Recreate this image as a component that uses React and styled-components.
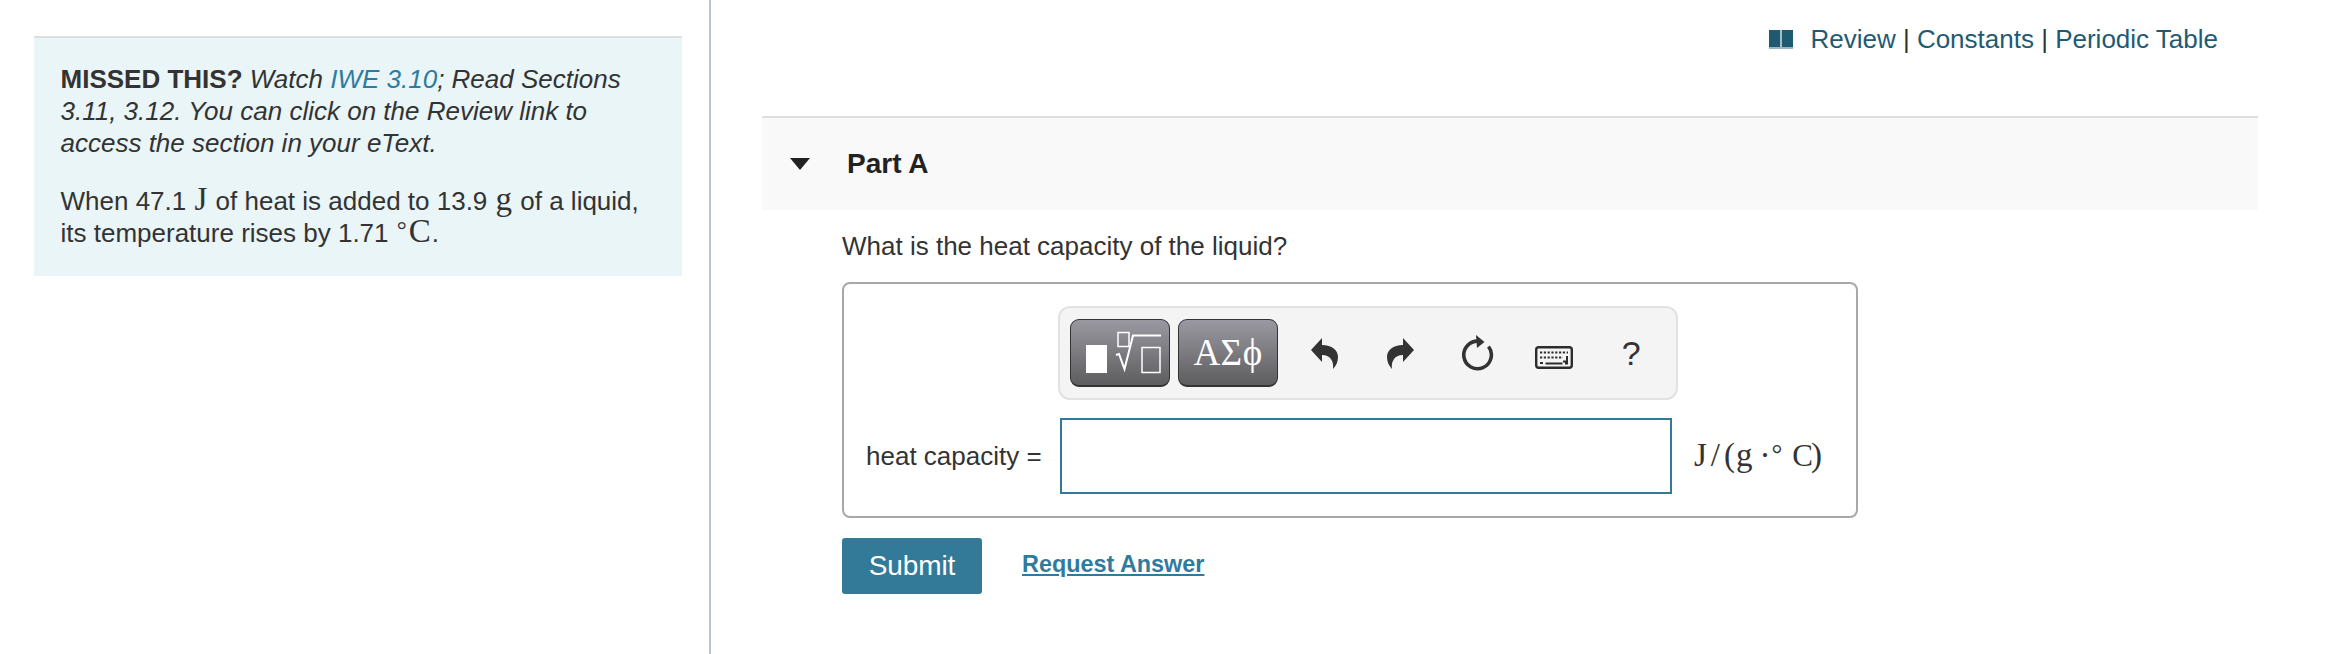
import React from 'react';
import styled, { createGlobalStyle } from 'styled-components';

const Global = createGlobalStyle`
  html, body { margin: 0; padding: 0; background: #fff; }
  body { font-family: "Liberation Sans", Arial, sans-serif; color: #333; }
`;
const Page = styled.div`
  display: grid; grid-template-columns: 711px 1fr; width: 2346px; height: 654px; overflow: hidden;
`;
const LeftColumn = styled.aside`
  border-right: 2px solid #b9c5cc; padding: 36px 27px 0 34px; box-sizing: border-box; height: 654px;
`;
const Intro = styled.section`
  border-top: 2px solid #dedee0; background: #e9f5f7; height: 240px; box-sizing: border-box;
  padding: 25px 38px 0 26.5px; font-size: 26px; line-height: 32px; color: #333;
`;
const Para = styled.p`
  margin: 0 0 25.5px;
`;
const Em = styled.em``;
const TextLink = styled.a`
  color: #2f7ba0;
`;
const Math = styled.span`
  font-family: "Liberation Serif", serif; font-size: 33px; line-height: 20px; margin: 0 1px;
`;
const Degree = styled.span`
  font-family: "Liberation Serif", serif; font-size: 25px; line-height: 20px; margin: 0 1px 0 1px; vertical-align: 4px;
`;
const RightColumn = styled.main`
  padding: 0 88px 0 51px; box-sizing: border-box;
`;
const ResourceBar = styled.nav`
  display: flex; align-items: center; justify-content: flex-end; height: 116px; padding: 0 40px 38px 0; box-sizing: border-box;
  font-size: 26px; color: #333; white-space: pre;
`;
const BookIcon = styled.svg`
  width: 24px; height: 21px; margin-right: 17px;
`;
const ResourceLink = styled.a`
  color: #1f5a73;
`;
const PartHeader = styled.header`
  display: flex; align-items: center; height: 94px; box-sizing: border-box; border-top: 2px solid #dedee0; background: #f9f9f9;
  padding: 0 0 0 28px;
`;
const Caret = styled.span`
  width: 0; height: 0; border-left: 10px solid transparent; border-right: 10px solid transparent; border-top: 12px solid #222;
  margin-right: 37px;
`;
const PartTitle = styled.h2`
  margin: 0; font-size: 28px; font-weight: 700; color: #222;
`;
const PartBody = styled.div`
  padding: 0 0 0 80px;
`;
const Question = styled.p`
  margin: 0; height: 72px; display: flex; align-items: center; font-size: 26px; color: #333;
`;
const AnswerBox = styled.div`
  width: 1016px; height: 236px; box-sizing: border-box; border: 2px solid #a8a8a8; border-radius: 8px;
  padding: 22px 22px 0 22px;
`;
const Toolbar = styled.div`
  display: flex; align-items: center; width: 620px; height: 94px; margin-left: 192px; box-sizing: border-box;
  border: 2px solid #e2e2e2; border-radius: 12px; background: #f4f4f4; padding: 0 0 0 10px;
`;
const TemplateButton = styled.div`
  display: flex; align-items: center; justify-content: center; width: 100px; height: 68px; margin-right: 8px; flex: none;
  box-sizing: border-box; border: 1px solid #333; border-bottom-width: 2px; border-radius: 9px;
  background: linear-gradient(#9a99a1, #5d5d5f); color: #fff;
`;
const Symbols = styled.span`
  font-family: "Liberation Serif", serif; font-size: 37px; letter-spacing: 0.5px; color: #fff;
`;
const ToolSlot = styled.div`
  display: flex; align-items: center; justify-content: center; width: 76.5px; height: 68px; color: #333; flex: none;
  &:first-of-type { margin-left: 3px; }
`;
const Help = styled.span`
  font-size: 34px; color: #333; margin-left: 2px;
`;
const AnswerRow = styled.div`
  display: flex; align-items: center; margin-top: 18px; height: 76px;
`;
const Label = styled.label`
  width: 194px; font-size: 26px; color: #333; white-space: nowrap;
`;
const Input = styled.input`
  width: 612px; height: 76px; box-sizing: border-box; border: 2px solid #337a99; background: #fff; outline: none; padding: 0;
`;
const Units = styled.span`
  margin: 0 0 2px 22px; font-family: "Liberation Serif", serif; font-size: 33px; color: #333; white-space: nowrap; letter-spacing: 1px;
`;
const UnitSlash = styled.span`
  margin: 0 3px;
`;
const UnitDot = styled.span`
  margin: 0 0 0 6px;
`;
const UnitDegree = styled.span`
  font-size: 27px; vertical-align: 3px; margin-right: 9px;
`;
const UnitC = styled.span`
  font-size: 31px; letter-spacing: -2px;
`;
const Actions = styled.div`
  display: flex; align-items: center; margin-top: 20px;
`;
const Submit = styled.button`
  width: 140px; height: 56px; border: 0; border-radius: 3px; background: #337a99; color: #fff; padding: 0;
  font-family: inherit; font-size: 28px; letter-spacing: -0.1px;
`;
const RequestLink = styled.a`
  margin: 0 0 4px 40px; color: #2f7ba0; font-weight: 700; font-size: 23.4px; text-decoration: underline;
`;
const Glyph = styled.svg`
  display: block; flex: none;
`;
const FlipGlyph = styled(Glyph)`
  transform: ${p => (p.$flip ? 'scaleX(-1)' : 'none')};
`;
const KeyboardGlyph = styled(Glyph)`
  margin-top: 8px;
`;

const TemplateGlyph = () => (
  <Glyph width="98" height="65" viewBox="0 0 98 65" fill="none" stroke="#fff">
    <rect x="15" y="25" width="21" height="28" fill="#fff" stroke="none" />
    <rect x="47" y="12.5" width="11" height="14" strokeWidth="1.5" />
    <path d="M45 35l3-1 5.5 15L62 15.5h28" strokeWidth="2" />
    <rect x="71" y="27.5" width="18" height="25" strokeWidth="1.5" />
  </Glyph>
);
const UndoIcon = ({ flip }) => (
  <FlipGlyph $flip={flip} width="27" height="31" viewBox="0 0 27 31">
    <path fill="#333" d="M0 12L11 0v7c10 0 16 5 16 12 0 5-2 9-5 12 1-7-2-14-11-14v7z" />
  </FlipGlyph>
);
const ReloadIcon = () => (
  <Glyph width="36" height="38" viewBox="0 0 36 38" fill="none">
    <path d="M20 7.2A13.8 13.8 0 1 0 29.5 12.5" stroke="#333" strokeWidth="3.6" />
    <path fill="#333" d="M17 1l8.5 7L18 14z" />
  </Glyph>
);
const KeyboardIcon = () => (
  <KeyboardGlyph width="38" height="23" viewBox="0 0 38 23" fill="none" stroke="#2c2c2c">
    <rect x="1.2" y="1.2" width="35.6" height="20.6" rx="2.5" strokeWidth="2.4" />
    <path d="M5 6.5h28M5 11.5h23" strokeWidth="2.2" strokeDasharray="2.2 1.6" />
    <path d="M32 10v5.5h-4M5 17h3M10.5 17.5h17M30 17.5h3" strokeWidth="2" />
  </KeyboardGlyph>
);

export default function App() {
  return (
    <Page>
      <Global />
      <LeftColumn>
        <Intro>
          <Para>
            <strong>MISSED THIS?</strong> <Em>Watch <TextLink>IWE 3.10</TextLink>; Read Sections 3.11, 3.12. You can click on the Review link to access the section in your eText.</Em>
          </Para>
          <Para>
            When 47.1 <Math>J</Math> of heat is added to 13.9 <Math>g</Math> of a liquid, its temperature rises by 1.71 <Degree>°</Degree><Math>C</Math>.
          </Para>
        </Intro>
      </LeftColumn>
      <RightColumn>
        <ResourceBar>
          <BookIcon viewBox="0 0 24 21">
            <path fill="#1f5a73" d="M0 1h11.2v17H0zM12.8 1H24v17H12.8z" />
            <path fill="#9db5c1" d="M0 18h11.2v2H0zM12.8 18H24v2H12.8zM11.2 1h1.6v19h-1.6z" />
          </BookIcon>
          <ResourceLink>Review</ResourceLink>{' | '}<ResourceLink>Constants</ResourceLink>{' | '}<ResourceLink>Periodic Table</ResourceLink>
        </ResourceBar>
        <PartHeader>
          <Caret />
          <PartTitle>Part A</PartTitle>
        </PartHeader>
        <PartBody>
          <Question>What is the heat capacity of the liquid?</Question>
          <AnswerBox>
            <Toolbar>
              <TemplateButton><TemplateGlyph /></TemplateButton>
              <TemplateButton><Symbols>ΑΣϕ</Symbols></TemplateButton>
              <ToolSlot><UndoIcon /></ToolSlot>
              <ToolSlot><UndoIcon flip /></ToolSlot>
              <ToolSlot><ReloadIcon /></ToolSlot>
              <ToolSlot><KeyboardIcon /></ToolSlot>
              <ToolSlot><Help>?</Help></ToolSlot>
            </Toolbar>
            <AnswerRow>
              <Label>heat capacity =</Label>
              <Input aria-label="heat capacity" />
              <Units>J<UnitSlash>/</UnitSlash>(g<UnitDot>·</UnitDot><UnitDegree>°</UnitDegree><UnitC>C</UnitC>)</Units>
            </AnswerRow>
          </AnswerBox>
          <Actions>
            <Submit>Submit</Submit>
            <RequestLink>Request Answer</RequestLink>
          </Actions>
        </PartBody>
      </RightColumn>
    </Page>
  );
}
